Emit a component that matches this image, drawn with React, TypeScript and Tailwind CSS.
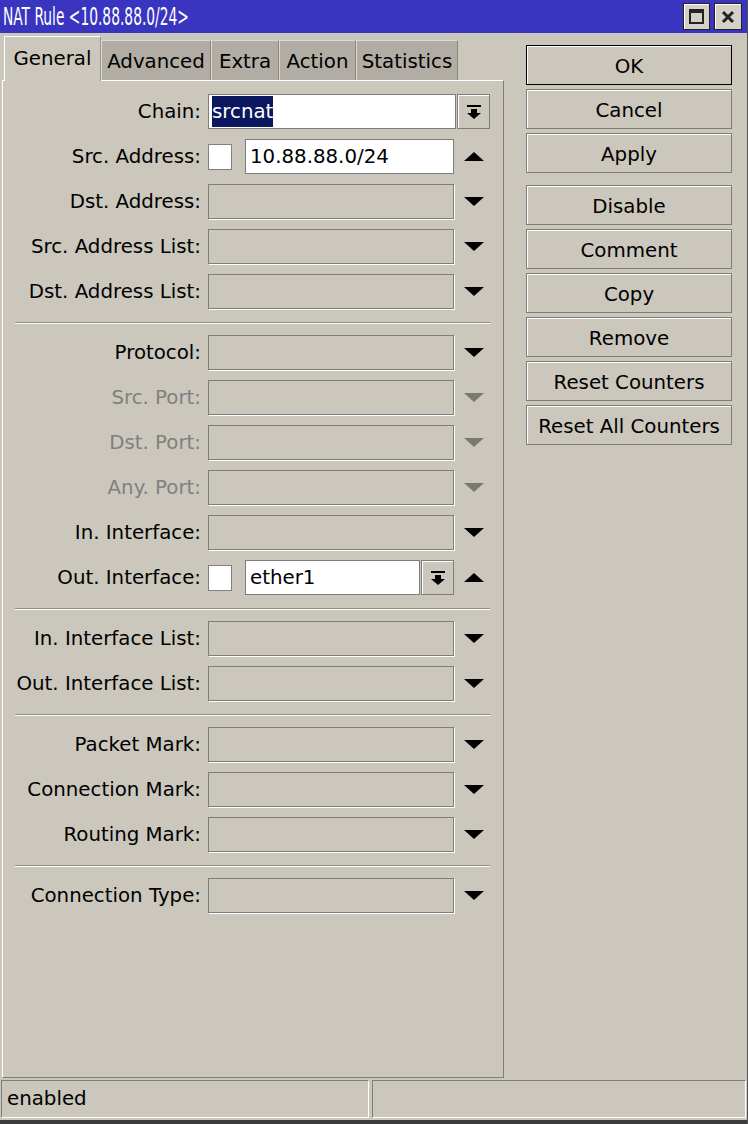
import React from "react";

const FONT = { fontFamily: '"DejaVu Sans", "Liberation Sans", sans-serif' };

type Kind = "chain" | "empty" | "check" | "checkDrop";
type RowDef = { label: string; kind: Kind; value?: string; arrow?: "up" | "down"; off?: boolean };

const groups: RowDef[][] = [
  [
    { label: "Chain:", kind: "chain", value: "srcnat" },
    { label: "Src. Address:", kind: "check", value: "10.88.88.0/24", arrow: "up" },
    { label: "Dst. Address:", kind: "empty", arrow: "down" },
    { label: "Src. Address List:", kind: "empty", arrow: "down" },
    { label: "Dst. Address List:", kind: "empty", arrow: "down" },
  ],
  [
    { label: "Protocol:", kind: "empty", arrow: "down" },
    { label: "Src. Port:", kind: "empty", arrow: "down", off: true },
    { label: "Dst. Port:", kind: "empty", arrow: "down", off: true },
    { label: "Any. Port:", kind: "empty", arrow: "down", off: true },
    { label: "In. Interface:", kind: "empty", arrow: "down" },
    { label: "Out. Interface:", kind: "checkDrop", value: "ether1", arrow: "up" },
  ],
  [
    { label: "In. Interface List:", kind: "empty", arrow: "down" },
    { label: "Out. Interface List:", kind: "empty", arrow: "down" },
  ],
  [
    { label: "Packet Mark:", kind: "empty", arrow: "down" },
    { label: "Connection Mark:", kind: "empty", arrow: "down" },
    { label: "Routing Mark:", kind: "empty", arrow: "down" },
  ],
  [{ label: "Connection Type:", kind: "empty", arrow: "down" }],
];

const buttons = ["OK", "Cancel", "Apply", "Disable", "Comment", "Copy", "Remove", "Reset Counters", "Reset All Counters"];

function DropIcon() {
  return (
    <svg width="16" height="16" viewBox="0 0 16 16">
      <rect x="1" y="1" width="14" height="2" fill="#000" />
      <rect x="5" y="5" width="6" height="4" fill="#000" />
      <polygon points="1,9 15,9 8,15" fill="#000" />
    </svg>
  );
}

function Arrow({ dir, off }: { dir: "up" | "down"; off?: boolean }) {
  const fill = off ? "#787b6c" : "#000";
  return (
    <svg width="20" height="9" viewBox="0 0 20 9">
      {dir === "down" ? <polygon points="0,0 20,0 10,9" fill={fill} /> : <polygon points="10,0 20,9 0,9" fill={fill} />}
    </svg>
  );
}

function DropButton({ w }: { w: string }) {
  return (
    <div className={`${w} h-[35px] flex items-center justify-center border border-[#7d7d7d] shadow-[inset_1px_1px_0_#fff]`}>
      <DropIcon />
    </div>
  );
}

function Row({ r }: { r: RowDef }) {
  return (
    <div className="flex items-center h-[35px]">
      <div className={`w-[198px] text-right whitespace-nowrap ${r.off ? "text-[#808080]" : "text-black"}`}>{r.label}</div>
      <div className="ml-[7px] flex items-center">
        {r.kind === "chain" && (
          <>
            <div className="w-[248px] h-[35px] bg-white border border-[#7d7d7d] flex items-center pl-[3px]">
              <span className="bg-[#0b175e] text-white h-[31px] leading-[31px]">{r.value}</span>
            </div>
            <div className="ml-px">
              <DropButton w="w-[33px]" />
            </div>
          </>
        )}
        {r.kind === "empty" && (
          <div className="w-[246px] h-[35px] border border-[#7d7d7d] shadow-[1px_1px_0_#fff]" />
        )}
        {(r.kind === "check" || r.kind === "checkDrop") && (
          <>
            <div className="w-[24px] h-[26px] bg-white border border-[#808080]" />
            <div className="ml-[13px] flex items-center">
              {r.kind === "check" ? (
                <div className="w-[209px] h-[35px] bg-white border border-[#7d7d7d] flex items-center pl-[4px]">{r.value}</div>
              ) : (
                <>
                  <div className="w-[175px] h-[35px] bg-white border border-[#7d7d7d] flex items-center pl-[4px]">{r.value}</div>
                  <div className="ml-px">
                    <DropButton w="w-[33px]" />
                  </div>
                </>
              )}
            </div>
          </>
        )}
        {r.arrow && (
          <div className="w-[38px] flex justify-center pl-[1px]">
            <Arrow dir={r.arrow} off={r.off} />
          </div>
        )}
      </div>
    </div>
  );
}

export default function App() {
  return (
    <div className="w-[748px] h-[1124px] flex flex-col bg-[#cbc7bd] text-[19.8px] text-black border-r border-[#555] overflow-hidden" style={FONT}>
      {/* title bar */}
      <div className="h-[33px] bg-[#3a35c0] flex items-center justify-between pl-[3px] pr-[5px]">
        <span
          className="text-white text-[24px] inline-block origin-left scale-x-[0.64] whitespace-nowrap"
          style={{ fontFamily: '"DejaVu Sans Condensed", "DejaVu Sans", sans-serif' }}
        >
          NAT Rule &lt;10.88.88.0/24&gt;
        </span>
        <div className="flex gap-[4px]">
          <div className="w-[27px] h-[27px] bg-[#d4d0c8] border border-[#222] shadow-[inset_1px_1px_0_#fff] flex items-center justify-center">
            <div className="w-[15px] h-[15px] border-2 border-t-[4px] border-[#222]" />
          </div>
          <div className="w-[28px] h-[27px] bg-[#d4d0c8] border border-[#222] shadow-[inset_1px_1px_0_#fff] flex items-center justify-center">
            <svg width="14" height="14" viewBox="0 0 14 14">
              <path d="M2 2 L12 12 M12 2 L2 12" stroke="#222" strokeWidth="3" />
            </svg>
          </div>
        </div>
      </div>

      {/* main */}
      <div className="h-[1047px] flex">
        <div className="w-[504px] pl-[2px] flex flex-col">
          {/* tabs */}
          <div className="h-[47px] flex items-end">
            <div className="ml-[2px] w-[97px] h-[45px] -mb-px relative z-10 bg-[#cbc7bd] border-t border-l border-white border-r border-r-[#9a978f] flex items-center justify-center">
              General
            </div>
            {[
              ["Advanced", "w-[110px]"],
              ["Extra", "w-[68px]"],
              ["Action", "w-[77px]"],
              ["Statistics", "w-[102px]"],
            ].map(([t, w]) => (
              <div
                key={t}
                className={`${w} h-[40px] bg-[#b1ada5] border-t border-l border-[#dedad2] border-r border-r-[#8c8982] flex items-center justify-center pt-[2px]`}
              >
                {t}
              </div>
            ))}
          </div>

          {/* panel */}
          <div className="w-[502px] h-[998px] border-t border-l border-white border-r border-b border-r-[#7d7d7d] border-b-[#7d7d7d] pt-[13px]">
            <div className="flex flex-col gap-[10px]">
              {groups.map((g, gi) => (
                <React.Fragment key={gi}>
                  {gi > 0 && <div className="ml-[12px] w-[475px] h-[2px] mt-[3px] mb-[1px] border-t border-[#8f8c85] border-b border-b-white" />}
                  {g.map((r) => (
                    <Row key={r.label} r={r} />
                  ))}
                </React.Fragment>
              ))}
            </div>
          </div>
        </div>

        {/* buttons */}
        <div className="ml-[22px] pt-[12px] flex flex-col gap-[4px]">
          {buttons.map((b, i) => (
            <div
              key={b}
              className={`w-[206px] h-[40px] flex items-center justify-center pt-[3px] border shadow-[inset_1px_1px_0_#fff] ${
                i === 0 ? "border-black" : "border-[#7d7d7d]"
              } ${i === 3 ? "mt-[8px]" : ""}`}
            >
              {b}
            </div>
          ))}
        </div>
      </div>

      {/* status bar */}
      <div className="h-[40px] flex gap-[3px] px-[1px] pb-[2px]">
        <div className="w-[368px] h-full border-t border-l border-[#7d7d7d] border-r border-b border-r-white border-b-white flex items-center pl-[5px]">
          enabled
        </div>
        <div className="flex-1 h-full border-t border-l border-[#7d7d7d] border-r border-b border-r-white border-b-white" />
      </div>
      <div className="flex-1 bg-[#3c3c3c]" />
    </div>
  );
}
